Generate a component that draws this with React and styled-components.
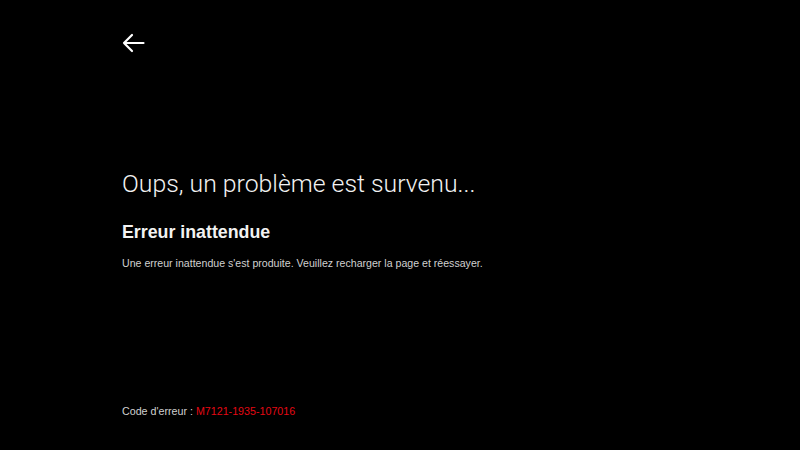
import React from "react";
import styled, { createGlobalStyle } from "styled-components";

const GlobalStyle = createGlobalStyle`
  html, body {
    margin: 0;
    padding: 0;
    background: #000;
  }
  body {
    font-family: "Liberation Sans", Arial, sans-serif;
    color: #fff;
  }
`;

const Page = styled.div`
  height: 450px;
  box-sizing: border-box;
  padding: 31px 0 32px 122px;
  display: flex;
  flex-direction: column;
  background: #000;
`;

const BackButton = styled.button`
  width: 23px;
  height: 24px;
  padding: 0;
  border: none;
  background: none;
  cursor: pointer;
  display: flex;
  align-items: center;
  justify-content: flex-start;
`;

const Content = styled.div`
  margin-top: 114px;
  display: flex;
  flex-direction: column;
`;

const Title = styled.h1`
  margin: 0;
  font-family: Roboto, "Liberation Sans", sans-serif;
  font-weight: 300;
  font-size: 24.8px;
  line-height: 30px;
  color: #f2f2f2;
`;

const Subtitle = styled.h2`
  margin: 23px 0 0;
  font-size: 17.8px;
  line-height: 21px;
  font-weight: 700;
  color: #f2f2f2;
`;

const Message = styled.p`
  margin: 13px 0 0;
  font-size: 10.6px;
  line-height: 14px;
  color: #d0d0d0;
`;

const Footer = styled.div`
  margin-top: auto;
  font-size: 10.7px;
  line-height: 14px;
  color: #d0d0d0;
`;

const Code = styled.span`
  color: #e50914;
`;

export default function App() {
  return (
    <>
      <GlobalStyle />
      <Page>
        <BackButton aria-label="Retour">
          <svg width="23" height="20" viewBox="0 0 23 20" fill="none">
            <path
              d="M21.5 10H2M10 2L2 10l8 8"
              stroke="#fff"
              strokeWidth="2.2"
              strokeLinecap="round"
              strokeLinejoin="round"
            />
          </svg>
        </BackButton>
        <Content>
          <Title>Oups, un problème est survenu...</Title>
          <Subtitle>Erreur inattendue</Subtitle>
          <Message>
            Une erreur inattendue s'est produite. Veuillez recharger la page et réessayer.
          </Message>
        </Content>
        <Footer>
          Code d'erreur : <Code>M7121-1935-107016</Code>
        </Footer>
      </Page>
    </>
  );
}
